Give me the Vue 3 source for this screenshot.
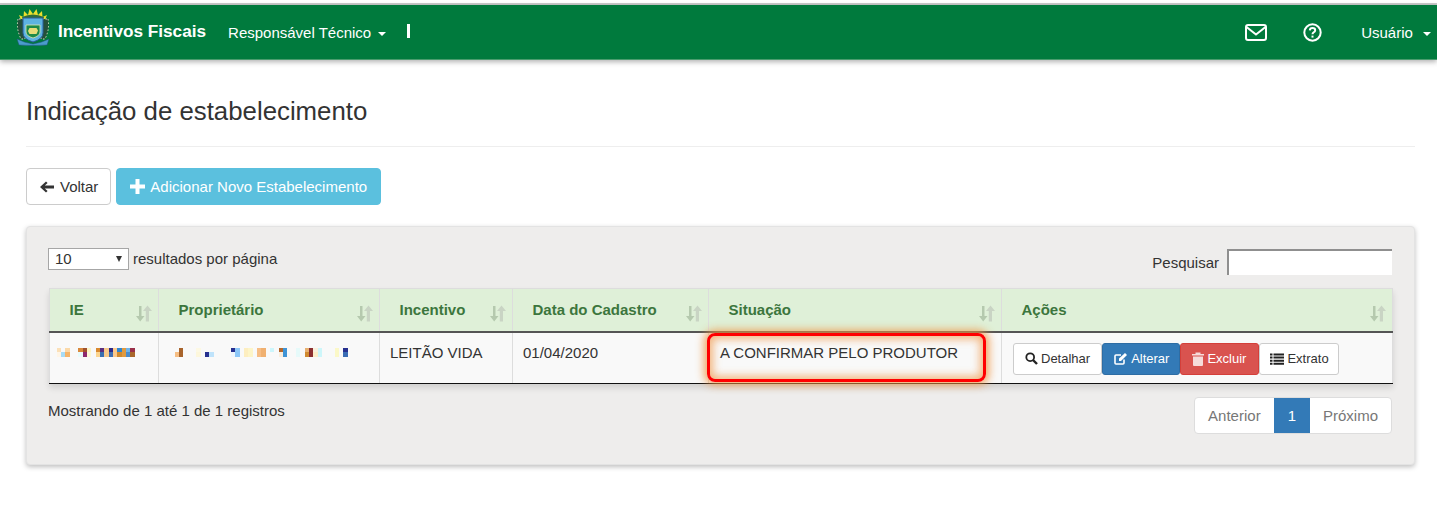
<template>
  <div class="page">
    <nav class="navbar">
      <svg class="logo" width="36" height="38" viewBox="0 0 36 38">
        <path d="M6 12 L4 7 L8.5 9 L9 3 L13 7 L14.5 1 L18 6 L21.5 1 L23 7 L27 3 L27.5 9 L32 7 L30 12 Z" fill="#eadf2e" />
        <path d="M7 9 Q18 4 29 9 L28 12 H8 Z" fill="#2f6d3d" />
        <path d="M3 11 Q1 21 6 31 L10 31 L10 11 Z" fill="#24503a" stroke="#d6dfc0" stroke-width="1" stroke-dasharray="1.5 2" />
        <path d="M33 11 Q35 21 30 31 L26 31 L26 11 Z" fill="#24503a" stroke="#d6dfc0" stroke-width="1" stroke-dasharray="1.5 2" />
        <path d="M8 10 H28 V25 Q28 31 18 34 Q8 31 8 25 Z" fill="#5db3e2" stroke="#2a5c99" stroke-width="1" />
        <path d="M11 17 H25 V24 Q25 28 18 30 Q11 28 11 24 Z" fill="#1d8a4a" stroke="#dfe8b0" stroke-width="0.8" />
        <path d="M13 23 L14.5 20 L21.5 20 L23 22.5 L21.5 26 H14.5 Z" fill="#e8dc78" />
        <path d="M2 31 Q10 35 18 36 Q26 35 34 31 L32 37 Q18 38 4 37 Z" fill="#4a9ccc" stroke="#1f4f7f" stroke-width="0.5" />
      </svg>
      <span class="brand">Incentivos Fiscais</span>
      <span class="nav-link menu-left">Responsável Técnico <i class="caret"></i></span>
      <span class="divider"></span>
      <span class="spacer"></span>
      <svg class="nav-icon mail" width="22" height="17" viewBox="0 0 22 17" fill="none" stroke="#fff" stroke-width="2">
        <rect x="1" y="1" width="20" height="15" rx="2" />
        <path d="M1.5 3 L11 10.5 L20.5 3" />
      </svg>
      <svg class="nav-icon help" width="19" height="19" viewBox="0 0 19 19" fill="none" stroke="#fff" stroke-width="2">
        <circle cx="9.5" cy="9.5" r="8.2" />
        <path d="M6.8 7.4 Q6.9 5 9.5 5 Q12.2 5 12.2 7.2 Q12.2 8.5 10.6 9.3 Q9.5 9.9 9.5 11.2" />
        <path d="M9.5 12.6 V14.6" />
      </svg>
      <span class="nav-link user">Usuário <i class="caret"></i></span>
    </nav>

    <main class="content">
      <h1 class="title">Indicação de estabelecimento</h1>
      <div class="actions">
        <button class="btn btn-default">
          <svg width="14" height="12" viewBox="0 0 14 12"><path d="M6 0.5 L7.6 2 L4.8 4.6 H14 V7.4 H4.8 L7.6 10 L6 11.5 L0 6 Z" fill="#333" /></svg>
          Voltar
        </button>
        <button class="btn btn-info">
          <svg width="15" height="15" viewBox="0 0 15 15"><path d="M5.5 0 H9.5 V5.5 H15 V9.5 H9.5 V15 H5.5 V9.5 H0 V5.5 H5.5 Z" fill="#fff" /></svg>
          Adicionar Novo Estabelecimento
        </button>
      </div>

      <section class="panel">
        <div class="toolbar">
          <div class="length">
            <div class="select">10<i class="select-arrow"></i></div>
            <span>resultados por página</span>
          </div>
          <div class="search">
            <span>Pesquisar</span>
            <div class="search-input"></div>
          </div>
        </div>

        <table class="grid">
          <colgroup>
            <col v-for="w in widths" :key="w" :style="{ width: w + 'px' }" />
          </colgroup>
          <thead>
            <tr>
              <th v-for="h in headers" :key="h">
                {{ h }}
                <svg class="sort" width="18" height="17" viewBox="0 0 18 17">
                  <path d="M4 1 H6.5 V11 H9.5 L5.2 16.5 L1 11 H4 Z" fill="#b5c9ae" />
                  <path d="M10.8 16.5 V6 H8 L12.5 0.5 L17 6 H14 V16.5 Z" fill="#c9d4c4" />
                </svg>
              </th>
            </tr>
          </thead>
          <tbody>
            <tr>
              <td class="ie"><div class="mosaic"><i v-for="(c, i) in cellsIe" :key="i" :style="{ background: c }"></i></div></td>
              <td class="owner"><div class="mosaic"><i v-for="(c, i) in cellsOwner" :key="i" :style="{ background: c }"></i></div></td>
              <td>LEITÃO VIDA</td>
              <td>01/04/2020</td>
              <td class="status">
                A CONFIRMAR PELO PRODUTOR
                <span class="highlight"></span>
              </td>
              <td class="row-actions">
                <div class="btn-group">
                  <button class="btn-xs light">
                    <svg width="13" height="13" viewBox="0 0 13 13" fill="none" stroke="#222" stroke-width="1.8"><circle cx="5.2" cy="5.2" r="3.9" /><path d="M8 8 L12 12" stroke-width="2.4" /></svg>
                    Detalhar
                  </button>
                  <button class="btn-xs blue">
                    <svg width="14" height="13" viewBox="0 0 14 13" fill="none" stroke="#fff" stroke-width="1.6"><path d="M10 7.5 V11 Q10 12 9 12 H2 Q1 12 1 11 V4 Q1 3 2 3 H7" /><path d="M5 6.5 L11 1 L13 3 L7 9 H5 Z" fill="#fff" stroke="none" /></svg>
                    Alterar
                  </button>
                  <button class="btn-xs red">
                    <svg width="12" height="14" viewBox="0 0 12 14"><path d="M0 2 H3.5 V0.5 H8.5 V2 H12 V3.5 H0 Z M1 4.5 H11 V13 Q11 14 10 14 H2 Q1 14 1 13 Z" fill="#f6dcdb" /></svg>
                    Excluir
                  </button>
                  <button class="btn-xs light">
                    <svg width="14" height="12" viewBox="0 0 14 12" fill="#222"><path d="M0 0.5 H2.5 V2.5 H0 Z M3.5 0.5 H14 V2.5 H3.5 Z M0 3.6 H2.5 V5.6 H0 Z M3.5 3.6 H14 V5.6 H3.5 Z M0 6.7 H2.5 V8.7 H0 Z M3.5 6.7 H14 V8.7 H3.5 Z M0 9.8 H2.5 V11.8 H0 Z M3.5 9.8 H14 V11.8 H3.5 Z" /></svg>
                    Extrato
                  </button>
                </div>
              </td>
            </tr>
          </tbody>
        </table>

        <div class="footer">
          <span class="info">Mostrando de 1 até 1 de 1 registros</span>
          <div class="pagination">
            <span class="page-item">Anterior</span>
            <span class="page-item active">1</span>
            <span class="page-item">Próximo</span>
          </div>
        </div>
      </section>
    </main>
  </div>
</template>

<script setup>
const widths = [109, 221, 133, 196, 293, 391]
const headers = ['IE', 'Proprietário', 'Incentivo', 'Data do Cadastro', 'Situação', 'Ações']

// pixelated (redacted) values: one [top, bottom] pair per column
const e = 'transparent'
const mosaicIe = [
  ['#fbe0b8', '#fff5e6'], [e, '#a8dcf7'], ['#fbd9a8', '#f5b56a'], [e, e], [e, e],
  ['#d9893c', '#e8fbfb'], ['#a0522d', '#8e2a6e'], ['#fdf3c4', '#fdf8d8'], [e, e],
  ['#d9892f', '#fcd58f'], ['#5a2f80', '#3a6fb0'], ['#f7c98a', '#f7c98a'], ['#2b2a8a', '#3f6fb4'],
  ['#fcc98a', '#fcc98a'], ['#2e86d0', '#d08a30'], ['#e09a40', '#e09a40'], ['#6fb4ea', '#4a8ccc'],
  ['#9a2f4a', '#a9672c'],
]
const mosaicOwner = Array.from({ length: 40 }, () => [e, e])
const ownerCols = {
  0: [e, '#f6be84'], 1: ['#a8642c', '#a8642c'], 5: ['#fdf9e4', '#fdf7dc'],
  7: [e, '#27308f'], 8: [e, '#bfe3fb'], 13: ['#27308f', '#eef6fd'], 14: ['#8cc7f8', '#8cc7f8'],
  16: ['#fdeec0', '#fdeec0'], 17: ['#fdf5c8', '#fdf5c8'], 19: ['#f6bd85', '#f6bd85'], 20: ['#f0b070', '#f0b070'],
  22: ['#cdf6fc', e], 24: ['#b5682c', '#fbeedd'], 25: ['#3f94d6', '#3f94d6'], 28: ['#e6fafa', '#e6fafa'],
  30: ['#e8b070', '#d08a30'], 31: ['#8c2f30', '#8c2f30'], 32: ['#fbf0dc', '#fdeec8'], 33: ['#cdf6fa', '#cdf6fa'],
  37: ['#fbf8c8', '#fbf8c8'], 39: ['#27308f', '#3a6cb4'],
}
Object.keys(ownerCols).forEach((k) => { mosaicOwner[k] = ownerCols[k] })

const cellsIe = mosaicIe.flat()
const cellsOwner = mosaicOwner.flat()
</script>

<style>
html, body {
  margin: 0;
  background: #fff;
}
</style>

<style scoped>
.page {
  height: 514px;
  overflow: hidden;
  font-family: "Liberation Sans", Arial, sans-serif;
  font-size: 15px;
  color: #333;
  background: #fff;
  padding-top: 5px;
  box-sizing: border-box;
}
.page::before {
  content: "";
  display: block;
  height: 2px;
  margin-top: -2px;
  background: #c9c9c9;
}
.navbar {
  height: 55px;
  background: #007a3d;
  display: flex;
  align-items: center;
  padding-left: 15px;
  border-bottom: 1px solid #4a9c6e;
  box-shadow: 0 2px 5px rgba(0, 0, 0, 0.3);
  color: #fff;
  box-sizing: border-box;
}
.logo {
  margin-bottom: 10px;
}
.brand {
  font-weight: bold;
  font-size: 17.2px;
  margin-left: 7px;
  margin-top: -2px;
}
.nav-link {
  font-size: 15px;
  white-space: nowrap;
}
.menu-left {
  margin-left: 22px;
}
.caret {
  display: inline-block;
  width: 0;
  height: 0;
  margin-left: 3px;
  vertical-align: middle;
  border-top: 4px solid #fff;
  border-left: 4px solid transparent;
  border-right: 4px solid transparent;
}
.divider {
  width: 3px;
  height: 14px;
  background: #fff;
  margin-left: 21px;
  margin-top: -2px;
}
.spacer {
  flex: 1;
}
.help {
  margin-left: 36px;
}
.user {
  margin-left: 39px;
  margin-right: 6px;
}
.user .caret {
  margin-left: 6px;
}
.content {
  padding: 0 22px 0 26px;
}
.title {
  font-size: 25.8px;
  font-weight: 400;
  line-height: 30px;
  margin: 0;
  padding: 36px 0 20px;
  border-bottom: 1px solid #eee;
  color: #333;
}
.actions {
  display: flex;
  gap: 5px;
  margin-top: 21px;
}
.btn {
  height: 37px;
  border-radius: 4px;
  font-family: inherit;
  font-size: 15px;
  padding: 0 13px;
  display: flex;
  align-items: center;
  gap: 5px;
  box-sizing: border-box;
  border: 1px solid #ccc;
}
.btn-default {
  background: #fff;
  color: #333;
  gap: 6px;
  padding-right: 12px;
}
.btn-info {
  background: #5bc0de;
  border-color: #5bc0de;
  color: #fff;
}
.panel {
  margin-top: 21px;
  height: 239px;
  background: #eeedec;
  border: 1px solid #e3e3e3;
  border-radius: 4px;
  box-shadow: 0 2px 5px rgba(0, 0, 0, 0.25);
  padding: 21px 22px 0 21px;
  box-sizing: border-box;
}
.toolbar {
  display: flex;
  justify-content: space-between;
  height: 40px;
  font-size: 15px;
}
.length {
  display: flex;
  align-items: flex-start;
  gap: 4px;
}
.length span {
  line-height: 22px;
}
.select {
  width: 81px;
  height: 22px;
  background: #fff;
  border: 1px solid #a6a6a6;
  box-sizing: border-box;
  line-height: 20px;
  padding-left: 6px;
  font-size: 15px;
  position: relative;
}
.select-arrow {
  position: absolute;
  right: 6px;
  top: 7px;
  border-top: 6px solid #333;
  border-left: 3.5px solid transparent;
  border-right: 3.5px solid transparent;
}
.search {
  display: flex;
  align-items: flex-start;
  gap: 8px;
  margin-top: 1px;
}
.search span {
  line-height: 28px;
}
.search-input {
  width: 165px;
  height: 26px;
  background: #fff;
  border-top: 2px solid #8f8f8f;
  border-left: 2px solid #8f8f8f;
  box-sizing: border-box;
}
.grid {
  table-layout: fixed;
  width: 1343px;
  margin-left: 1px;
  border-collapse: collapse;
  box-shadow: 0 4px 6px rgba(0, 0, 0, 0.12);
}
.grid th {
  height: 43px;
  background: #dff0d8;
  color: #3c763d;
  font-weight: bold;
  font-size: 15px;
  text-align: left;
  padding: 0 0 0 19.5px;
  border: 1px solid #ddd;
  border-bottom: 2px solid #555;
  position: relative;
  box-sizing: border-box;
}
.sort {
  position: absolute;
  right: 5px;
  top: 16px;
}
.grid td {
  height: 52px;
  background: #f9f9f9;
  padding: 10px 10px 0;
  vertical-align: top;
  border-left: 1px solid #ddd;
  border-right: 1px solid #ddd;
  border-bottom: 1px solid #111;
  box-sizing: border-box;
  font-size: 15px;
  line-height: 20px;
  white-space: nowrap;
}
.grid td.row-actions {
  padding: 10px 10px 0 11px;
}
.grid td.status {
  padding-left: 11px;
  position: relative;
}
.mosaic {
  display: grid;
  grid-auto-flow: column;
  grid-template-rows: repeat(2, 4.5px);
  grid-auto-columns: 4.33px;
  margin-top: 5px;
}
.mosaic i {
  display: block;
}
.ie .mosaic {
  margin-left: -3.3px;
}
.owner .mosaic {
  margin-left: 5.7px;
}
.highlight {
  position: absolute;
  left: -2px;
  top: 0;
  width: 279px;
  height: 49px;
  border: 3px solid #f00;
  border-radius: 8px;
  box-sizing: border-box;
  box-shadow: 0 0 8px 3px rgba(240, 150, 70, 0.85), inset 0 0 8px 3px rgba(240, 150, 70, 0.7);
}
.btn-group {
  display: flex;
}
.btn-xs {
  height: 32px;
  font-family: inherit;
  font-size: 13px;
  padding: 0 11px;
  display: flex;
  align-items: center;
  gap: 3px;
  box-sizing: border-box;
  border: 1px solid #ccc;
  border-radius: 3px;
  background: #fff;
  color: #333;
}
.btn-xs:last-child {
  padding: 0 9px 0 10px;
}
.btn-xs.blue {
  background: #337ab7;
  border-color: #2e6da4;
  color: #fff;
  padding-right: 10px;
}
.btn-xs.red {
  background: #d9534f;
  border-color: #d43f3a;
  color: #fff;
  padding-right: 12px;
}
.footer {
  display: flex;
  justify-content: space-between;
  margin-top: 13px;
}
.info {
  font-size: 15px;
  line-height: 20px;
  color: #333;
  margin-top: 4px;
}
.pagination {
  display: flex;
  height: 37px;
  border: 1px solid #ddd;
  border-radius: 4px;
  box-sizing: border-box;
  background: #fff;
  overflow: hidden;
}
.page-item {
  padding: 0 13px;
  line-height: 35px;
  color: #777;
  font-size: 15px;
}
.page-item.active {
  background: #337ab7;
  color: #fff;
  padding: 0 14px;
}
</style>
